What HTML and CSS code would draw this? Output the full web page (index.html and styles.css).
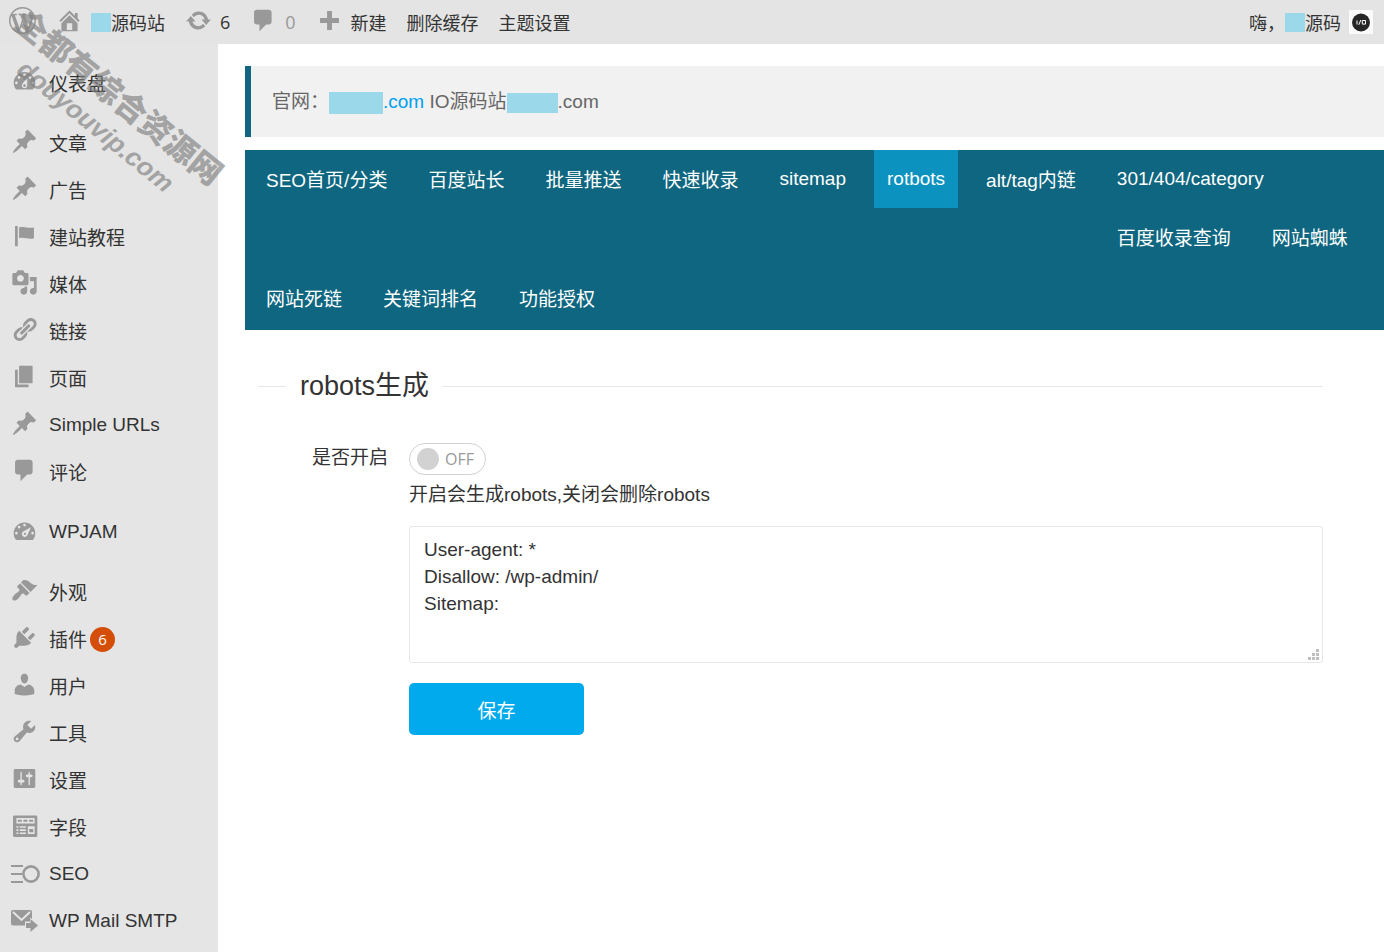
FILE: index.html
```html
<!DOCTYPE html>
<html lang="zh-CN">
<head>
<meta charset="utf-8">
<title>robots生成</title>
<link rel="stylesheet" href="styles.css">
</head>
<body>
<svg class="sprite" aria-hidden="true">
  <symbol id="pin" viewBox="0 0 20 20"><path d="M10.44 3.02l1.82-1.82 6.36 6.35-1.83 1.82c-1.05-.68-2.48-.57-3.41.36l-.75.75c-.92.93-1.04 2.35-.35 3.41l-1.83 1.82-2.41-2.41-2.8 2.79c-.42.42-3.38 2.71-3.8 2.29s1.86-3.39 2.28-3.81l2.79-2.79L4.1 9.36l1.83-1.82c1.05.69 2.48.57 3.4-.36l.75-.75c.93-.92 1.05-2.35.36-3.41z"/></symbol>
  <symbol id="comment" viewBox="0 0 20 20"><path d="M5 2h9c1.1 0 2 .9 2 2v7c0 1.1-.9 2-2 2h-2l-5 5v-5H5c-1.1 0-2-.9-2-2V4c0-1.1.9-2 2-2z"/></symbol>
</svg>

<header class="adminbar">
  <a class="bar-item bar-logo" href="#" aria-label="WordPress"><svg class="icon" viewBox="0 0 20 20"><path d="M20 10c0-5.51-4.49-10-10-10C4.48 0 0 4.49 0 10c0 5.52 4.48 10 10 10 5.51 0 10-4.48 10-10zM7.78 15.37L4.37 6.22c.55-.02 1.17-.08 1.17-.08.5-.06.44-1.13-.06-1.11 0 0-1.45.11-2.37.11-.18 0-.37 0-.58-.01C4.12 2.69 6.87 1.11 10 1.11c2.33 0 4.45.87 6.05 2.34-.68-.11-1.65.39-1.65 1.58 0 .74.45 1.36.9 2.1.35.61.55 1.36.55 2.46 0 1.49-1.4 5-1.4 5l-3.03-8.37c.54-.02.82-.17.82-.17.5-.05.44-1.25-.06-1.22 0 0-1.44.12-2.38.12-.87 0-2.33-.12-2.33-.12-.5-.03-.56 1.2-.06 1.22l.92.08 1.26 3.41zM17.41 10c.24-.64.74-1.87.43-4.25.7 1.29 1.05 2.71 1.05 4.25 0 3.29-1.73 6.24-4.4 7.78.97-2.59 1.94-5.2 2.92-7.78zM6.1 18.09C3.12 16.65 1.11 13.53 1.11 10c0-1.3.23-2.48.72-3.59C3.25 10.3 4.67 14.2 6.1 18.09zm4.03-6.63l2.58 6.98c-.86.29-1.76.45-2.71.45-.79 0-1.57-.11-2.29-.33.81-2.38 1.62-4.74 2.42-7.1z"/></svg></a>
  <a class="bar-item" href="#"><svg class="icon" viewBox="0 0 20 20"><path d="M16 8.5l1.53 1.53-1.06 1.06L10 4.6l-6.47 6.49-1.06-1.06L10 2.5l4 4v-2h2v4zm-6-2.46l6 5.99V18H4v-5.97zM12 17v-5H8v5h4z"/></svg><span class="mask mask-small"></span>源码站</a>
  <a class="bar-item" href="#"><svg class="icon" viewBox="0 0 20 20"><path d="M10.2 3.28c3.53 0 6.43 2.61 6.92 6h2.08l-3.5 4-3.5-4h2.32c-.45-1.97-2.21-3.45-4.32-3.45-1.45 0-2.73.71-3.54 1.78L4.95 5.66C6.23 4.2 8.11 3.28 10.2 3.28zm-.4 13.44c-3.52 0-6.43-2.61-6.92-6H.8l3.5-4c1.17 1.33 2.33 2.67 3.5 4H5.48c.45 1.97 2.21 3.45 4.32 3.45 1.45 0 2.73-.71 3.54-1.78l1.71 1.95c-1.28 1.46-3.15 2.38-5.25 2.38z"/></svg>6</a>
  <a class="bar-item bar-muted" href="#"><svg class="icon"><use href="#comment"/></svg>0</a>
  <a class="bar-item" href="#"><svg class="icon" viewBox="0 0 20 20"><path d="M8.2 3h3.6v5.2H17v3.6h-5.2V17H8.2v-5.2H3V8.200h5.200z"/></svg>新建</a>
  <a class="bar-item" href="#">删除缓存</a>
  <a class="bar-item" href="#">主题设置</a>
  <a class="bar-item bar-user" href="#">嗨，<span class="mask mask-small"></span>源码
    <svg class="avatar" viewBox="0 0 24 24"><rect width="24" height="24" fill="#fafafa"/><circle cx="12" cy="12.500" r="9" fill="#262626"/><path d="M8 10.500v4M9.800 14.800l2-4.800M13.300 10.500h3.200v3.600h-3.200z" fill="none" stroke="#fff" stroke-width="1"/></svg></a>
</header>

<div class="layout">
  <nav class="sidebar" aria-label="主菜单">
    <ul class="menu">
      <li><a href="#"><svg class="icon" viewBox="0 0 20 20"><path d="M3.760 16h12.480c1.100-1.370 1.760-3.110 1.760-5 0-4.420-3.580-8-8-8s-8 3.580-8 8c0 1.890.66 3.630 1.760 5zM10 4c.55 0 1 .45 1 1s-.45 1-1 1-1-.45-1-1 .45-1 1-1zM6 6c.55 0 1 .45 1 1s-.45 1-1 1-1-.45-1-1 .45-1 1-1zm8 0c.55 0 1 .45 1 1s-.45 1-1 1-1-.45-1-1 .45-1 1-1zm-5.370 5.550L12 7v6c0 1.100-.9 2-2 2s-2-.9-2-2c0-.57.24-1.080.63-1.450zM4 10c.55 0 1 .45 1 1s-.45 1-1 1-1-.45-1-1 .45-1 1-1zm12 0c.55 0 1 .45 1 1s-.45 1-1 1-1-.45-1-1 .45-1 1-1zm-5 3c0-.55-.45-1-1-1s-1 .45-1 1 .45 1 1 1 1-.45 1-1z"/></svg>仪表盘</a></li>
    </ul>
    <ul class="menu">
      <li><a href="#"><svg class="icon"><use href="#pin"/></svg>文章</a></li>
      <li><a href="#"><svg class="icon"><use href="#pin"/></svg>广告</a></li>
      <li><a href="#"><svg class="icon" viewBox="0 0 20 20"><path d="M5 18V3H3v15h2zm1-6V4c3-1 7 1 11 0v8c-3 1.270-8-1-11 0z"/></svg>建站教程</a></li>
      <li><a href="#"><svg class="icon" viewBox="0 0 20 20"><path d="M13 11V4c0-.55-.45-1-1-1h-1.670L9 1H5L3.670 3H2c-.55 0-1 .45-1 1v7c0 .55.45 1 1 1h10c.55 0 1-.45 1-1zM7 4.500c1.380 0 2.500 1.120 2.500 2.500S8.380 9.500 7 9.500 4.500 8.380 4.500 7 5.620 4.500 7 4.500zM14 6h5v10.500c0 1.380-1.120 2.500-2.500 2.500S14 17.880 14 16.500s1.120-2.500 2.500-2.500c.17 0 .34.02.5.05V9h-3V6zm-4 8.050V13h2v3.500c0 1.380-1.120 2.500-2.500 2.500S7 17.880 7 16.500 8.120 14 9.500 14c.17 0 .34.02.5.05z"/></svg>媒体</a></li>
      <li><a href="#"><svg class="icon" viewBox="0 0 20 20"><path d="M17.740 2.760c1.680 1.690 1.680 4.410 0 6.100l-1.530 1.520c-1.120 1.120-2.700 1.470-4.140 1.090l2.620-2.610.76-.77.76-.76c.84-.84.84-2.200 0-3.040-.84-.85-2.200-.85-3.040 0l-.77.76-3.380 3.380c-.37-1.440-.02-3.020 1.100-4.140l1.520-1.530c1.690-1.680 4.420-1.680 6.100 0zM8.590 13.430l5.340-5.340c.42-.42.42-1.100 0-1.520-.44-.43-1.130-.39-1.530 0l-5.330 5.340c-.42.42-.42 1.100 0 1.520.44.43 1.130.39 1.520 0zm-.76 2.290l4.140-4.150c.38 1.440.03 3.020-1.090 4.140l-1.520 1.530c-1.690 1.680-4.410 1.680-6.100 0-1.680-1.680-1.680-4.420 0-6.100l1.530-1.520c1.120-1.120 2.700-1.470 4.140-1.100l-4.140 4.150c-.85.84-.85 2.200 0 3.050.84.84 2.200.84 3.040 0z"/></svg>链接</a></li>
      <li><a href="#"><svg class="icon" viewBox="0 0 20 20"><path d="M6 15V2h10v13H6zm-1 1h8v2H3V5h2v11z"/></svg>页面</a></li>
      <li><a href="#"><svg class="icon"><use href="#pin"/></svg>Simple URLs</a></li>
      <li><a href="#"><svg class="icon"><use href="#comment"/></svg>评论</a></li>
    </ul>
    <ul class="menu">
      <li><a href="#"><svg class="icon" viewBox="0 0 20 20"><path fill-rule="evenodd" d="M3.760 17h12.480c1.100-1.370 1.760-3.110 1.760-5 0-4.420-3.580-8-8-8s-8 3.580-8 8c0 1.890.66 3.630 1.760 5zM10 5a1 1 0 1 1 0 2 1 1 0 0 1 0-2zM6 6.500a1 1 0 1 1 0 2 1 1 0 0 1 0-2zM4 11a1 1 0 1 1 0 2 1 1 0 0 1 0-2zM16 11a1 1 0 1 1 0 2 1 1 0 0 1 0-2zM14.800 7.500L12.300 13.200A2.200 2.200 0 1 1 9 10.700zM10.300 11.700a.8.8 0 1 0 0 1.600.8.8 0 0 0 0-1.600z"/></svg>WPJAM</a></li>
    </ul>
    <ul class="menu">
      <li><a href="#"><svg class="icon" viewBox="0 0 20 20"><path d="M14.480 11.060L7.410 3.990l1.500-1.500c.5-.56 2.300-.47 3.510.32 1.210.8 1.430 1.280 2.910 2.100 1.180.64 2.450 1.260 4.450.85zm-.71.71L6.700 4.700 4.930 6.470c-.39.39-.39 1.020 0 1.410l1.060 1.060c.39.39.39 1.030 0 1.420-.6.6-1.430 1.110-2.210 1.690-.35.26-.7.53-1.010.84C1.430 14.230.4 16.080 1.400 17.070c.99 1 2.840-.03 4.180-1.360.31-.31.58-.66.85-1.020.57-.78 1.080-1.610 1.690-2.210.39-.39 1.020-.39 1.410 0l1.060 1.060c.39.39 1.020.39 1.410 0z"/></svg>外观</a></li>
      <li><a href="#"><svg class="icon" viewBox="0 0 20 20"><path d="M13.110 4.360L9.870 7.600 8 5.730l3.240-3.240c.35-.34 1.050-.2 1.560.32.52.51.66 1.210.31 1.550zm-8 1.770l.91-1.120 9.010 9.010-1.190.84c-.71.71-2.630 1.160-3.820 1.160H6.140L4.900 17.260c-.59.59-1.540.59-2.120 0-.59-.58-.59-1.530 0-2.120l1.240-1.240v-3.880c0-1.130.4-3.190 1.090-3.890zm7.260 3.970l3.240-3.240c.34-.35 1.040-.21 1.550.31.52.51.66 1.210.31 1.550l-3.240 3.250z"/></svg>插件<span class="count">6</span></a></li>
      <li><a href="#"><svg class="icon" viewBox="0 0 20 20"><path d="M10 9.250c-2.270 0-2.730-3.440-2.730-3.440C7 4.020 7.820 2 9.970 2c2.160 0 2.980 2.020 2.710 3.810 0 0-.41 3.440-2.680 3.440zm0 2.570L12.720 10c2.390 0 4.520 2.330 4.520 4.530v2.490s-3.650 1.130-7.240 1.130c-3.650 0-7.240-1.130-7.240-1.130v-2.490c0-2.250 1.940-4.480 4.470-4.480z"/></svg>用户</a></li>
      <li><a href="#"><svg class="icon" viewBox="0 0 20 20"><path d="M16.680 9.770c-1.340 1.340-3.300 1.670-4.950.99l-5.410 6.520c-.99.99-2.590.99-3.580 0s-.99-2.590 0-3.570l6.520-5.420c-.68-1.650-.35-3.610.99-4.950 1.280-1.280 3.120-1.620 4.720-1.060l-2.890 2.890 2.820 2.820 2.860-2.870c.53 1.580.18 3.390-1.080 4.650zM3.810 16.210c.4.39 1.040.39 1.430 0 .4-.4.4-1.040 0-1.430-.39-.4-1.030-.4-1.430 0-.39.39-.39 1.030 0 1.430z"/></svg>工具</a></li>
      <li><a href="#"><svg class="icon" viewBox="0 0 20 20"><path d="M18 16V4c0-.55-.45-1-1-1H3c-.55 0-1 .45-1 1v12c0 .55.45 1 1 1h14c.55 0 1-.45 1-1zM8 11h1c.55 0 1 .45 1 1s-.45 1-1 1H8v1.500c0 .28-.22.5-.5.5s-.5-.22-.5-.5V13H6c-.55 0-1-.45-1-1s.45-1 1-1h1V5.500c0-.28.22-.5.5-.5s.5.22.5.5V11zm5-2h-1c-.55 0-1-.45-1-1s.45-1 1-1h1V5.500c0-.28.22-.5.5-.5s.5.22.5.5V7h1c.55 0 1 .45 1 1s-.45 1-1 1h-1v5.500c0 .28-.22.5-.5.5s-.5-.22-.5-.5V9z"/></svg>设置</a></li>
      <li><a href="#"><svg class="icon" viewBox="0 0 20 20"><path fill-rule="evenodd" d="M2.500 2.500h16a1 1 0 0 1 1 1v14a1 1 0 0 1-1 1h-16a1 1 0 0 1-1-1v-14a1 1 0 0 1 1-1zM4 4.500v4h13.500v-4zM5 5.700h3v1.600H5zM9.200 5.700h3v1.600h-3zM13.400 5.700h3v1.600h-3zM4 10.500v1.200h1.500v-1.200zM6.500 10.500v1.200H11v-1.200zM4 12.800V14h1.500v-1.200zM6.500 12.800V14H11v-1.200zM4 15.100v1.200h1.500v-1.200zM6.500 15.100v1.200H11v-1.200zM12.500 10.500v5.800h5v-5.800zM13.500 12.500h3V15h-3z"/></svg>字段</a></li>
      <li><a href="#"><svg class="icon icon-wide" viewBox="0 0 30 24"><path d="M0 4h12M0 12h11M0 20h12" fill="none" stroke="#999" stroke-width="2"/><circle cx="20" cy="12" r="7.600" fill="none" stroke="#999" stroke-width="2.600"/></svg>SEO</a></li>
      <li><a href="#"><svg class="icon icon-wide" viewBox="0 0 30 24"><path d="M2 1h17q2 0 2 2v7l-2-1.500v4h-5v4H2q-2 0-2-2V3q0-2 2-2z"/><path d="M2 3l8.500 8L19 3" fill="none" stroke="#e5e5e5" stroke-width="2"/><path d="M15 14h4.500v-4l7.500 6.500-7.500 6.500v-4H15z"/></svg>WP Mail SMTP</a></li>
    </ul>
  </nav>

  <main class="content">
    <p class="notice">官网：<span class="mask mask-link"></span><a href="#">.com</a>&nbsp;IO源码站<span class="mask mask-text"></span>.com</p>
    <nav class="tabs" aria-label="SEO设置">
      <ul>
        <li><a href="#">SEO首页/分类</a></li>
        <li><a href="#">百度站长</a></li>
        <li><a href="#">批量推送</a></li>
        <li><a href="#">快速收录</a></li>
        <li class="latin"><a href="#">sitemap</a></li>
        <li class="latin"><a class="active" href="#" aria-current="page">rotbots</a></li>
        <li><a href="#">alt/tag内链</a></li>
        <li class="latin"><a href="#">301/404/category</a></li>
        <li><a href="#">百度收录查询</a></li>
        <li><a href="#">网站蜘蛛</a></li>
        <li><a href="#">网站死链</a></li>
        <li><a href="#">关键词排名</a></li>
        <li><a href="#">功能授权</a></li>
      </ul>
    </nav>
    <form class="panel">
      <fieldset class="title"><legend>robots生成</legend></fieldset>
      <div class="row">
        <label class="row-label" for="enable">是否开启</label>
        <div class="row-body">
          <label class="switch"><input type="checkbox" id="enable"><span>OFF</span></label>
          <p class="hint">开启会生成robots,关闭会删除robots</p>
          <div class="editor">
            <textarea aria-label="robots内容" rows="4">User-agent: *
Disallow: /wp-admin/
Sitemap:</textarea>
            <svg class="grip" viewBox="0 0 11 11" aria-hidden="true"><path d="M8 0h3v3H8zM4 4h3v3H4zM8 4h3v3H8zM0 8h3v3H0zM4 8h3v3H4zM8 8h3v3H8z"/></svg>
          </div>
          <button class="save" type="button">保存</button>
        </div>
      </div>
    </form>
  </main>
</div>

<div class="watermark" aria-hidden="true"><span>全都有综合资源网</span><em>douyouvip.com</em></div>
</body>
</html>
```

FILE: styles.css
```css
* { box-sizing: border-box; }

body {
  margin: 0;
  min-height: 100vh;
  display: flex;
  flex-direction: column;
  background: #fff;
  color: #333;
  font-family: "Liberation Sans", "Noto Sans CJK SC", sans-serif;
  font-size: 19px;
  font-weight: 400;
}

a { color: inherit; text-decoration: none; }
ul, p { margin: 0; padding: 0; }
ul { list-style: none; }

.sprite { position: absolute; width: 0; height: 0; }
.icon { width: 27px; height: 27px; fill: #999; flex: none; }

.mask { display: inline-block; background: #9bd9ea; vertical-align: middle; }
.mask-small { width: 20px; height: 19px; }
.mask-link { width: 54px; height: 22px; }
.mask-text { width: 51px; height: 20px; }

/* Top bar */
.adminbar {
  display: flex;
  align-items: center;
  gap: 20px;
  height: 44px;
  padding: 0 11px 0 9px;
  background: #e4e4e4;
  font-family: "Open Sans", "Noto Sans CJK SC", sans-serif;
  font-size: 18px;
}
.bar-item { display: flex; align-items: center; white-space: nowrap; }
.bar-item .icon { margin: 0 8px 4px 0; }
.bar-logo .icon { margin-right: 0; }
.bar-muted { color: #999; }
.bar-user { margin-left: auto; }
.avatar { width: 24px; height: 24px; margin-left: 8px; }

/* Side menu */
.layout { display: flex; flex: 1; }
.sidebar { flex: 0 0 218px; padding-top: 15px; background: #e5e5e5; }
.menu + .menu { margin-top: 13px; }
.menu a { display: flex; align-items: center; height: 47px; padding-left: 11px; white-space: nowrap; }
.menu .icon { margin: 0 11px 2px 0; }
.menu .icon-wide { width: 30px; height: 24px; margin: 0 8px 0 0; }
.count {
  width: 25px;
  margin: 2px 0 0 3px;
  border-radius: 50%;
  background: #d54e07;
  color: #fff;
  font-family: "Open Sans", sans-serif;
  font-size: 15px;
  line-height: 25px;
  text-align: center;
}

/* Content */
.content { flex: 1; min-width: 0; padding: 22px 0 40px 27px; }
.notice {
  padding: 20px 21px;
  border-left: 6px solid #0e6680;
  background: #f1f1f1;
  color: #666;
  line-height: 31px;
}
.notice a { color: #01a0f0; }

.tabs { margin-top: 13px; background: #0e6680; color: #fff; }
.tabs ul { display: flow-root; }
.tabs li { float: left; margin: 0 7px 0 8px; line-height: 61px; }
.tabs .latin { line-height: 58px; }
.tabs a { display: block; padding: 0 13px; }
.tabs .active { background: #0b92bf; }

.panel { padding: 40px 61px 0 13px; }
.title { margin: 0; padding: 0; border: 0; border-top: 1px solid #e6e6e6; }
.title legend { margin-left: 28px; padding: 0 14px; font-size: 27px; line-height: 32px; }

.row { display: flex; margin-top: 41px; }
.row-label { flex: 0 0 151px; padding-right: 21px; text-align: right; line-height: 30px; }
.row-body { flex: 1; min-width: 0; }

.switch {
  display: flex;
  align-items: center;
  gap: 6px;
  width: 77px;
  height: 32px;
  padding-left: 7px;
  border: 1px solid #d2d2d2;
  border-radius: 16px;
  color: #999;
  font-family: "Open Sans", sans-serif;
  font-size: 16px;
}
.switch input { appearance: none; width: 22px; height: 22px; margin: 0; border-radius: 50%; background: #d2d2d2; }

.hint { padding: 4px 0 16px; line-height: 31px; }
.editor { position: relative; }
textarea {
  display: block;
  width: 100%;
  height: 137px;
  padding: 9px 14px;
  border: 1px solid #e6e6e6;
  border-radius: 3px;
  color: #333;
  font: inherit;
  line-height: 27px;
  resize: none;
}
.grip { position: absolute; right: 4px; bottom: 3px; width: 11px; height: 11px; fill: #bfbfbf; }
.save {
  margin-top: 20px;
  width: 175px;
  height: 52px;
  border: 0;
  border-radius: 5px;
  background: #01aaed;
  color: #fff;
  font: inherit;
}

/* Diagonal stamp over the page corner */
.watermark {
  position: absolute;
  top: 76px;
  left: -23px;
  display: flex;
  flex-direction: column;
  align-items: center;
  width: 260px;
  color: #808080;
  opacity: .65;
  font-size: 32px;
  font-weight: 900;
  line-height: 36px;
  white-space: nowrap;
  transform: rotate(39deg);
  pointer-events: none;
}
.watermark em { font-size: 26px; }
```
